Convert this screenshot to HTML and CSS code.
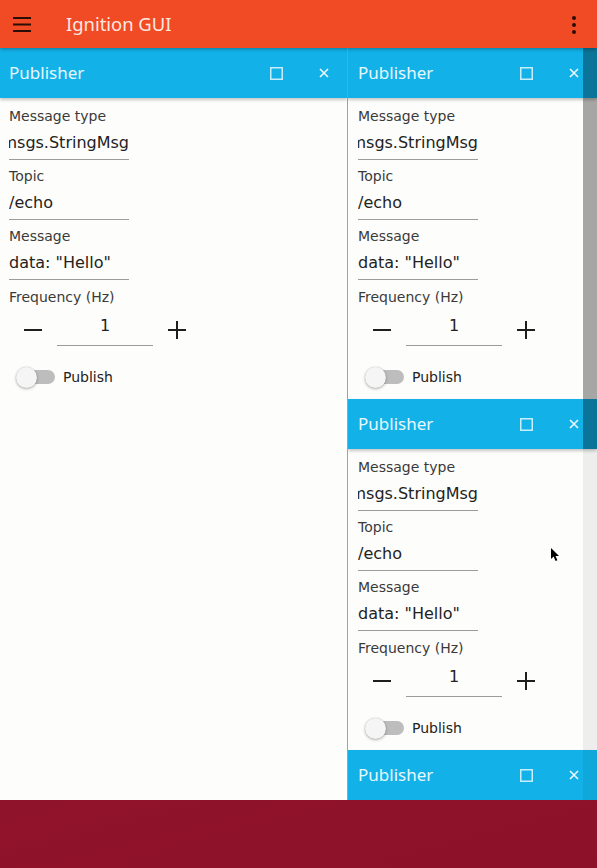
FILE: index.html
```html
<!DOCTYPE html>
<html>
<head>
<meta charset="utf-8">
<title>Ignition GUI</title>
<link rel="stylesheet" href="styles.css">
</head>
<body>
<div class="screen">
  <header class="appbar">
    <span class="menu-btn">
      <svg width="18" height="16" viewBox="0 0 18 16"><rect x="0" y="0" width="18" height="2" fill="#2a0d06"/><rect x="0" y="6.5" width="18" height="2" fill="#2a0d06"/><rect x="0" y="13" width="18" height="2" fill="#2a0d06"/></svg>
    </span>
    <span class="app-title">Ignition GUI</span>
    <span class="kebab-btn">
      <svg width="6" height="18" viewBox="0 0 6 18"><circle cx="3" cy="2" r="2" fill="#2a0d06"/><circle cx="3" cy="9" r="2" fill="#2a0d06"/><circle cx="3" cy="16" r="2" fill="#2a0d06"/></svg>
    </span>
  </header>

  <div class="main">
    <section class="panel panel-left">
      <div class="panel-head">
        <span class="panel-title">Publisher</span>
        <span class="head-btn"><svg width="13" height="13" viewBox="0 0 13 13"><rect x="0.75" y="0.75" width="11.5" height="11.5" fill="none" stroke="#c9eefb" stroke-width="1.5"/></svg></span>
        <span class="head-btn"><svg width="10" height="10" viewBox="0 0 10 10"><path d="M1 1 L9 9 M9 1 L1 9" stroke="#eef9fe" stroke-width="1.6"/></svg></span>
      </div>
      <div class="panel-body">
        <div class="field"><div class="label">Message type</div><div class="value value-end"><span>msgs.StringMsg</span></div></div>
        <div class="field"><div class="label">Topic</div><div class="value"><span>/echo</span></div></div>
        <div class="field"><div class="label">Message</div><div class="value"><span>data: "Hello"</span></div></div>
        <div class="label label-freq">Frequency (Hz)</div>
        <div class="spin">
          <span class="spin-btn"><svg width="18" height="18" viewBox="0 0 18 18"><rect x="0" y="8" width="18" height="2" fill="#1e1e1e"/></svg></span>
          <span class="spin-value">1</span>
          <span class="spin-btn"><svg width="18" height="18" viewBox="0 0 18 18"><rect x="0" y="8" width="18" height="2" fill="#1e1e1e"/><rect x="8" y="0" width="2" height="18" fill="#1e1e1e"/></svg></span>
        </div>
        <div class="switch-row">
          <span class="switch"><span class="track"></span><span class="knob"></span></span>
          <span class="switch-label">Publish</span>
        </div>
      </div>
    </section>

    <div class="right">
      <div class="stack">
        <section class="panel">
          <div class="panel-head">
            <span class="panel-title">Publisher</span>
            <span class="head-btn"><svg width="13" height="13" viewBox="0 0 13 13"><rect x="0.75" y="0.75" width="11.5" height="11.5" fill="none" stroke="#c9eefb" stroke-width="1.5"/></svg></span>
            <span class="head-btn"><svg width="10" height="10" viewBox="0 0 10 10"><path d="M1 1 L9 9 M9 1 L1 9" stroke="#eef9fe" stroke-width="1.6"/></svg></span>
          </div>
          <div class="panel-body">
            <div class="field"><div class="label">Message type</div><div class="value value-end"><span>msgs.StringMsg</span></div></div>
            <div class="field"><div class="label">Topic</div><div class="value"><span>/echo</span></div></div>
            <div class="field"><div class="label">Message</div><div class="value"><span>data: "Hello"</span></div></div>
            <div class="label label-freq">Frequency (Hz)</div>
            <div class="spin">
              <span class="spin-btn"><svg width="18" height="18" viewBox="0 0 18 18"><rect x="0" y="8" width="18" height="2" fill="#1e1e1e"/></svg></span>
              <span class="spin-value">1</span>
              <span class="spin-btn"><svg width="18" height="18" viewBox="0 0 18 18"><rect x="0" y="8" width="18" height="2" fill="#1e1e1e"/><rect x="8" y="0" width="2" height="18" fill="#1e1e1e"/></svg></span>
            </div>
            <div class="switch-row">
              <span class="switch"><span class="track"></span><span class="knob"></span></span>
              <span class="switch-label">Publish</span>
            </div>
          </div>
        </section>

        <section class="panel">
          <div class="panel-head">
            <span class="panel-title">Publisher</span>
            <span class="head-btn"><svg width="13" height="13" viewBox="0 0 13 13"><rect x="0.75" y="0.75" width="11.5" height="11.5" fill="none" stroke="#c9eefb" stroke-width="1.5"/></svg></span>
            <span class="head-btn"><svg width="10" height="10" viewBox="0 0 10 10"><path d="M1 1 L9 9 M9 1 L1 9" stroke="#eef9fe" stroke-width="1.6"/></svg></span>
          </div>
          <div class="panel-body">
            <div class="field"><div class="label">Message type</div><div class="value value-end"><span>msgs.StringMsg</span></div></div>
            <div class="field"><div class="label">Topic</div><div class="value"><span>/echo</span></div></div>
            <div class="field"><div class="label">Message</div><div class="value"><span>data: "Hello"</span></div></div>
            <div class="label label-freq">Frequency (Hz)</div>
            <div class="spin">
              <span class="spin-btn"><svg width="18" height="18" viewBox="0 0 18 18"><rect x="0" y="8" width="18" height="2" fill="#1e1e1e"/></svg></span>
              <span class="spin-value">1</span>
              <span class="spin-btn"><svg width="18" height="18" viewBox="0 0 18 18"><rect x="0" y="8" width="18" height="2" fill="#1e1e1e"/><rect x="8" y="0" width="2" height="18" fill="#1e1e1e"/></svg></span>
            </div>
            <div class="switch-row">
              <span class="switch"><span class="track"></span><span class="knob"></span></span>
              <span class="switch-label">Publish</span>
            </div>
          </div>
        </section>

        <section class="panel">
          <div class="panel-head">
            <span class="panel-title">Publisher</span>
            <span class="head-btn"><svg width="13" height="13" viewBox="0 0 13 13"><rect x="0.75" y="0.75" width="11.5" height="11.5" fill="none" stroke="#c9eefb" stroke-width="1.5"/></svg></span>
            <span class="head-btn"><svg width="10" height="10" viewBox="0 0 10 10"><path d="M1 1 L9 9 M9 1 L1 9" stroke="#eef9fe" stroke-width="1.6"/></svg></span>
          </div>
          <div class="panel-body">
            <div class="field"><div class="label">Message type</div><div class="value value-end"><span>msgs.StringMsg</span></div></div>
          </div>
        </section>
      </div>
      <div class="scrollbar"><div class="thumb"></div></div>
    </div>
  </div>

  <div class="cursor">
    <svg width="9" height="14" viewBox="0 0 9 14"><path d="M0 0 L0 11 L2.6 8.6 L4.6 13 L6.4 12.2 L4.5 7.9 L8 7.9 Z" fill="#000"/></svg>
  </div>
</div>
</body>
</html>
```

FILE: styles.css
```css
* {
  box-sizing: border-box;
  margin: 0;
  padding: 0;
}

html, body {
  width: 597px;
  height: 868px;
  overflow: hidden;
}

body {
  font-family: "DejaVu Sans", "Liberation Sans", sans-serif;
  background: #8e1329;
}

.screen {
  position: relative;
  width: 597px;
  height: 868px;
  display: flex;
  flex-direction: column;
  background: linear-gradient(165deg, #8b1128 0%, #93132e 45%, #8d1229 100%);
}

/* App bar */
.appbar {
  flex: none;
  height: 48px;
  display: flex;
  align-items: center;
  background: #f14b25;
  position: relative;
  z-index: 4;
  box-shadow: 0 1px 4px rgba(0, 0, 0, 0.35);
}

.menu-btn {
  width: 44px;
  height: 48px;
  display: flex;
  align-items: center;
  justify-content: center;
  padding-top: 1px;
}

.app-title {
  flex: 1;
  margin-left: 22px;
  font-family: "Noto Sans", "Open Sans", sans-serif;
  font-size: 18.4px;
  color: #fde8e1;
  padding-bottom: 1px;
}

.kebab-btn {
  width: 46px;
  height: 48px;
  display: flex;
  align-items: center;
  justify-content: center;
  padding-top: 1px;
}

/* Main area */
.main {
  flex: none;
  height: 752px;
  display: flex;
}

.panel-left {
  flex: none;
  width: 348px;
  border-right: 1px solid #a2a2a2;
  display: flex;
  flex-direction: column;
}

.right {
  flex: 1;
  position: relative;
  overflow: hidden;
}

.stack {
  display: flex;
  flex-direction: column;
}

.panel {
  flex: none;
  display: flex;
  flex-direction: column;
}

.panel-head {
  flex: none;
  height: 50px;
  display: flex;
  align-items: center;
  padding-left: 9px;
  background: #12b2e9;
  position: relative;
  z-index: 2;
  box-shadow: 0 2px 3px rgba(0, 0, 0, 0.22);
}

.right .panel-head {
  padding-left: 10px;
}

.panel-title {
  flex: 1;
  font-family: "Noto Sans", "Open Sans", sans-serif;
  font-size: 17px;
  color: #e8f8fe;
  padding-bottom: 1px;
}

.head-btn {
  width: 47px;
  height: 50px;
  display: flex;
  align-items: center;
  justify-content: center;
}

.panel-body {
  background: #fdfdfb;
  padding: 8px 0 0 9px;
  display: flex;
  flex-direction: column;
  align-items: flex-start;
  overflow: hidden;
}

.panel-body > * {
  flex: none;
}

.panel-left .panel-body {
  flex: 1;
}

.right .panel-body {
  height: 301px;
  padding-left: 10px;
}

.field {
  margin-bottom: 6px;
}

.label {
  height: 20px;
  line-height: 20px;
  font-size: 14px;
  color: #3a3a3a;
}

.label-freq {
  margin-top: 1px;
}

.value {
  width: 120px;
  height: 34px;
  border-bottom: 1px solid #9c9c9c;
  display: flex;
  align-items: center;
  overflow: hidden;
  white-space: nowrap;
  font-size: 16px;
  color: #222;
}

.value-end {
  justify-content: flex-end;
}

.value span {
  flex: none;
}

/* Spin box */
.spin {
  height: 39px;
  display: flex;
  align-items: stretch;
}

.spin-btn {
  width: 48px;
  display: flex;
  align-items: center;
  justify-content: center;
  padding-top: 6px;
}

.spin-value {
  width: 96px;
  border-bottom: 1px solid #9c9c9c;
  text-align: center;
  line-height: 38px;
  font-size: 16px;
  color: #222;
}

/* Switch */
.switch-row {
  margin-top: 7px;
  height: 48px;
  display: flex;
  align-items: center;
  gap: 6px;
}

.switch {
  width: 48px;
  height: 26px;
  display: grid;
  align-items: center;
}

.track,
.knob {
  grid-area: 1 / 1;
}

.track {
  justify-self: end;
  margin-right: 2px;
  width: 36px;
  height: 14px;
  border-radius: 7px;
  background: #bdbdbd;
}

.knob {
  justify-self: start;
  margin-left: 7px;
  width: 21px;
  height: 21px;
  border-radius: 50%;
  background: #f5f5f5;
  box-shadow: 0 1px 3px rgba(0, 0, 0, 0.3), 0 0 1px rgba(0, 0, 0, 0.2);
}

.switch-label {
  font-size: 14px;
  color: #222;
}

/* Scrollbar overlay */
.scrollbar {
  position: absolute;
  top: 0;
  right: 0;
  bottom: 0;
  width: 14px;
  z-index: 5;
  background: rgba(0, 0, 0, 0.06);
}

.thumb {
  height: 401px;
  background: rgba(0, 0, 0, 0.3);
}

/* Mouse pointer */
.cursor {
  position: absolute;
  left: 551px;
  top: 548px;
  z-index: 10;
  line-height: 0;
}
```
